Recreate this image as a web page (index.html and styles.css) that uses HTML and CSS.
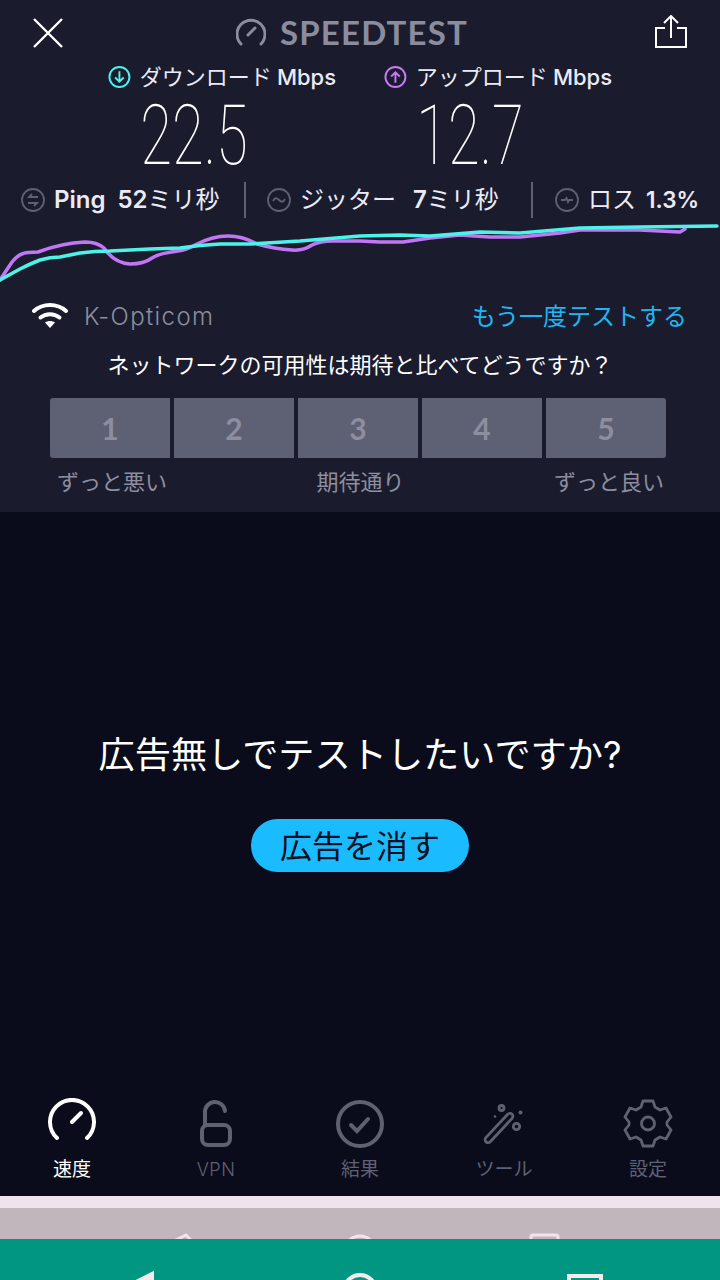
FILE: index.html
```html
<!DOCTYPE html>
<html lang="ja">
<head>
  <meta charset="UTF-8">
  <meta name="viewport" content="width=device-width, initial-scale=1.0">
  <title>Speedtest</title>
  <link rel="stylesheet" href="styles.css">
</head>
<body>
  <div class="results">
    <header class="topbar">
      <svg class="close-icon" viewBox="0 0 30 30"><path d="M1 1 L29 29 M29 1 L1 29"/></svg>
      <div class="brand">
        <svg class="brand-icon" viewBox="0 0 30 30"><path d="M5 27 A14 14 0 1 1 25 27"/><path d="M12 18 L19 11"/></svg>
        <span>SPEEDTEST</span>
      </div>
      <svg class="share-icon" viewBox="0 0 32 33"><path d="M10 13 H1 V32 H31 V13 H22"/><path d="M16 23 V1 M9 8 L16 1 L23 8"/></svg>
    </header>

    <div class="speed-labels">
      <div class="speed-label">
        <svg class="dir-icon down" viewBox="0 0 24 24"><circle cx="12" cy="12" r="10.5"/><path d="M12 6 V17 M7.5 12.5 L12 17 L16.5 12.5"/></svg>
        <span>ダウンロード</span><span class="unit">Mbps</span>
      </div>
      <div class="speed-label">
        <svg class="dir-icon up" viewBox="0 0 24 24"><circle cx="12" cy="12" r="10.5"/><path d="M12 18 V7 M7.5 11.5 L12 7 L16.5 11.5"/></svg>
        <span>アップロード</span><span class="unit">Mbps</span>
      </div>
    </div>

    <div class="speed-values">
      <div class="value">22.5</div>
      <div class="value">12.7</div>
    </div>

    <div class="stats">
      <div class="stat stat-ping">
        <svg class="stat-icon" viewBox="0 0 24 24"><circle cx="12" cy="12" r="11"/><path d="M17 9 H8 L11 6 M7 15 H16 L13 18"/></svg>
        <b>Ping</b><span class="num">52</span><span>ミリ秒</span>
      </div>
      <div class="sep"></div>
      <div class="stat stat-jitter">
        <svg class="stat-icon" viewBox="0 0 24 24"><circle cx="12" cy="12" r="11"/><path d="M6 13 C8 9 10 10 12 12 C14 14 16 15 18 11"/></svg>
        <span>ジッター</span><span class="num num-wide">7</span><span>ミリ秒</span>
      </div>
      <div class="sep"></div>
      <div class="stat stat-loss">
        <svg class="stat-icon" viewBox="0 0 24 24"><circle cx="12" cy="12" r="11"/><path d="M6 12 H10 L11.5 10 L13 14 L14 12 H18"/></svg>
        <span>ロス</span><span class="num num-loss">1.3%</span>
      </div>
    </div>

    <svg class="graph" viewBox="0 222 720 62">
      <path class="line-up" d="M0 280 L12 262 Q19 253 28 252.500 L38 252 Q62 243 85 242 Q97 242 104 248 Q114 263 130 264 Q144 264 152 258 Q160 253 178 251 Q186 250 195 245 Q212 236 228 236 Q243 236 257 244 Q275 249 292 250 Q303 251 312 245 Q320 241 332 241 L360 241 L380 242 L403 242 L430 238 L460 235 L490 237 L520 237 L560 233 L580 230 L640 230 L680 232 L685 229"/>
      <path class="line-down" d="M0 280 L20 269 Q32 263 40 260 Q50 257 60 257 L80 253 Q95 251 110 251 L150 249 L180 248 Q200 245 220 244 L250 244 L300 241 L360 236 L400 235 L430 236 L480 232 L520 233 L580 228 L640 227 L717 226"/>
    </svg>

    <div class="network">
      <div class="isp">
        <svg class="wifi-icon" viewBox="0 0 36 26"><path class="wifi-arc" d="M2 9 C11 1 25 1 34 9"/><path class="wifi-arc" d="M8.5 15.5 C14 11 22 11 27.500 15.500"/><path class="wifi-dot" d="M13 20.500 C16 18.500 20 18.500 23 20.500 L18 26 Z"/></svg>
        <span>K-Opticom</span>
      </div>
      <a class="retest">もう一度テストする</a>
    </div>

    <p class="question">ネットワークの可用性は期待と比べてどうですか？</p>

    <div class="rating">
      <div class="rate">1</div>
      <div class="rate">2</div>
      <div class="rate">3</div>
      <div class="rate">4</div>
      <div class="rate">5</div>
    </div>
    <div class="rating-labels">
      <span>ずっと悪い</span>
      <span>期待通り</span>
      <span>ずっと良い</span>
    </div>
  </div>

  <div class="ad">
    <p class="ad-title">広告無しでテストしたいですか?</p>
    <button class="ad-button">広告を消す</button>
  </div>

  <nav class="tabs">
    <div class="tab active">
      <svg viewBox="0 0 50 50"><path class="thick" d="M10 40 A22 22 0 1 1 40 40"/><path class="thick" d="M25 24 L34 15"/></svg>
      <span>速度</span>
    </div>
    <div class="tab">
      <svg viewBox="0 0 50 50"><rect class="thick" x="11" y="27" width="28" height="20" rx="6"/><path class="thick" d="M14 27 V15 A10 10 0 0 1 34 13"/></svg>
      <span class="tab-latin">VPN</span>
    </div>
    <div class="tab">
      <svg viewBox="0 0 50 50"><circle class="thick" cx="25" cy="26" r="22"/><path class="thick" d="M16 27 L22 33 L33 21"/></svg>
      <span>結果</span>
    </div>
    <div class="tab">
      <svg viewBox="0 0 50 50"><rect class="thin" x="1" y="27" width="38" height="6" rx="3" transform="rotate(-47 20 30)"/><circle class="thin" cx="22.500" cy="10" r="2.500"/><circle class="thin" cx="37.500" cy="28.500" r="3.200"/><circle class="dot" cx="41.500" cy="14.500" r="2"/><circle class="dot" cx="16" cy="18.500" r="1.300"/></svg>
      <span>ツール</span>
    </div>
    <div class="tab">
      <svg viewBox="0 0 50 50"><path class="thin" d="M20 3 H30 L32 9 L37 12 L43 10 L48 19 L44 24 V27 L48 32 L43 41 L37 39 L32 42 L30 48 H20 L18 42 L13 39 L7 41 L2 32 L6 27 V24 L2 19 L7 10 L13 12 L18 9 Z"/><circle class="thin" cx="25" cy="25.500" r="6.500"/></svg>
      <span>設定</span>
    </div>
  </nav>

  <div class="sys-strip"></div>
  <div class="sys-behind">
    <svg viewBox="0 0 720 31"><path d="M168 36 L186 27 L190 31 V40"/><circle cx="360" cy="44" r="16"/><rect x="531" y="27" width="27" height="27" rx="2"/></svg>
  </div>
  <div class="sys-nav">
    <svg viewBox="0 0 720 41"><path class="sys-back" d="M134 44 L152 35 V53 Z"/><circle cx="360" cy="52" r="16"/><rect x="569" y="37" width="32" height="32"/></svg>
  </div>
</body>
</html>
```

FILE: styles.css
```css
* {
  box-sizing: border-box;
}

body {
  margin: 0;
  width: 720px;
  height: 1280px;
  overflow: hidden;
  font-family: Inter, "Noto Sans CJK JP", sans-serif;
  background-color: #0a0c1b;
  color: #ecebf5;
}

svg {
  display: block;
  fill: none;
}

p {
  margin: 0;
}

.results {
  height: 512px;
  background-color: #1a1c2e;
}

/* top bar */
.topbar {
  height: 62px;
  padding: 15px 33px 0;
  display: flex;
  justify-content: space-between;
  align-items: flex-start;
}

.close-icon {
  width: 30px;
  height: 30px;
  margin-top: 3px;
  stroke: #fff;
  stroke-width: 2.4;
}

.brand {
  display: flex;
  align-items: center;
  gap: 14px;
  height: 34px;
  margin-right: 14px;
  font-family: Lato, sans-serif;
  font-size: 33px;
  font-weight: 700;
  letter-spacing: 1.2px;
  color: #8b8c9e;
}

.brand-icon {
  width: 30px;
  height: 30px;
  stroke: #8b8c9e;
  stroke-width: 3;
  stroke-linecap: round;
}

.share-icon {
  width: 32px;
  height: 33px;
  stroke: #fff;
  stroke-width: 2;
}

/* speed labels and numbers */
.speed-labels {
  height: 30px;
  padding-left: 108px;
  display: flex;
  gap: 48px;
}

.speed-label {
  width: 228px;
  display: flex;
  align-items: center;
  white-space: nowrap;
  font-size: 22px;
  line-height: 30px;
}

.unit {
  margin-left: 5px;
  font-weight: 500;
}

.dir-icon {
  width: 24px;
  height: 24px;
  margin-right: 9px;
  stroke-width: 2;
}

.dir-icon.down {
  stroke: #4df3e8;
}

.dir-icon.up {
  stroke: #c77bf5;
}

.speed-values {
  height: 88px;
  padding: 12px 0 0 56px;
  display: flex;
}

.value {
  width: 276px;
  height: 64px;
  text-align: center;
  font-family: Roboto, sans-serif;
  font-size: 84px;
  font-weight: 100;
  line-height: 64px;
  color: #fff;
  transform: scaleX(0.69);
}

/* ping, jitter, loss */
.stats {
  height: 40px;
  padding-left: 21px;
  display: flex;
  align-items: center;
  white-space: nowrap;
  font-size: 24px;
  line-height: 30px;
}

.stat {
  display: flex;
  align-items: center;
}

.stat b {
  font-weight: 600;
  margin-right: 12px;
}

.stat-ping {
  width: 223px;
}

.stat-jitter {
  width: 264px;
  margin-left: 21px;
}

.stat-loss {
  margin-left: 22px;
}

.stat-icon {
  width: 24px;
  height: 24px;
  margin-right: 9px;
  stroke: #5f6173;
  stroke-width: 1.8;
}

.num {
  font-weight: 600;
}

.num-wide {
  margin-left: 17px;
}

.num-loss {
  margin-left: 10px;
  font-size: 22.5px;
}

.sep {
  width: 2px;
  height: 36px;
  background-color: #5f6173;
}

/* graph */
.graph {
  width: 720px;
  height: 62px;
  margin-top: 2px;
}

.graph path {
  stroke-width: 3.5;
  stroke-linejoin: round;
  stroke-linecap: round;
}

.line-up {
  stroke: #c177f5;
}

.line-down {
  stroke: #4df3e8;
}

/* network row */
.network {
  height: 50px;
  padding: 0 33px 0 32px;
  margin-top: 7px;
  display: flex;
  justify-content: space-between;
  align-items: center;
}

.isp {
  display: flex;
  align-items: center;
  gap: 16px;
  font-size: 24px;
  font-weight: 300;
  letter-spacing: 1.4px;
  color: #8d8e9f;
}

.wifi-icon {
  width: 36px;
  height: 26px;
  margin-top: -2px;
}

.wifi-arc {
  stroke: #fff;
  stroke-width: 4;
  stroke-linecap: round;
}

.wifi-dot {
  fill: #fff;
}

.retest {
  padding-bottom: 4px;
  font-size: 24px;
  color: #1fb6f2;
}

.question {
  height: 40px;
  line-height: 40px;
  margin-top: 4px;
  text-align: center;
  font-size: 22px;
  color: #fff;
}

/* rating */
.rating {
  margin-top: 13px;
  padding-left: 50px;
  display: flex;
  gap: 4px;
}

.rate {
  width: 120px;
  height: 60px;
  line-height: 60px;
  text-align: center;
  font-family: Lato, sans-serif;
  font-size: 30px;
  font-weight: 700;
  color: #8d8e9f;
  background-color: #5e6073;
}

.rate:first-child {
  border-radius: 3px 0 0 3px;
}

.rate:last-child {
  border-radius: 0 3px 3px 0;
}

.rating-labels {
  height: 48px;
  padding: 0 56px 4px 57px;
  display: flex;
  justify-content: space-between;
  align-items: center;
  font-size: 22px;
  color: #8d8e9f;
}

/* ad area */
.ad {
  height: 574px;
  padding-top: 218px;
  display: flex;
  flex-direction: column;
  align-items: center;
}

.ad-title {
  height: 50px;
  line-height: 50px;
  font-size: 36.2px;
  color: #fff;
}

.ad-button {
  width: 218px;
  height: 53px;
  margin-top: 39px;
  padding: 0 0 4px;
  border: none;
  border-radius: 27px;
  font-family: inherit;
  font-size: 32px;
  color: #0b1020;
  background-color: #1bbcff;
}

/* bottom tabs */
.tabs {
  height: 110px;
  padding-top: 12px;
  display: flex;
}

.tab {
  width: 144px;
  display: flex;
  flex-direction: column;
  align-items: center;
  font-size: 19px;
  line-height: 26px;
  color: #5f6173;
}

.tab svg {
  width: 50px;
  height: 50px;
  margin-bottom: 9px;
  stroke: #5f6173;
}

.tab-latin {
  font-size: 18px;
  font-weight: 300;
  letter-spacing: 0.5px;
}

.tab.active {
  color: #fff;
}

.tab.active svg {
  stroke: #fff;
}

.thick {
  stroke-width: 4;
  stroke-linecap: round;
}

.thin {
  stroke-width: 2.8;
  stroke-linejoin: round;
}

.dot {
  fill: #5f6173;
  stroke: none;
}

/* android bars behind the app */
.sys-strip {
  height: 12px;
  background-color: #efe4ee;
}

.sys-behind {
  height: 31px;
  background-color: #c0b6bc;
}

.sys-behind svg {
  fill: none;
  stroke: #efe4ee;
  stroke-width: 3;
}

.sys-nav {
  height: 41px;
  background-color: #009682;
}

.sys-nav svg {
  stroke: #f4ecec;
  stroke-width: 4;
}

.sys-back {
  fill: #f4ecec;
}
```
